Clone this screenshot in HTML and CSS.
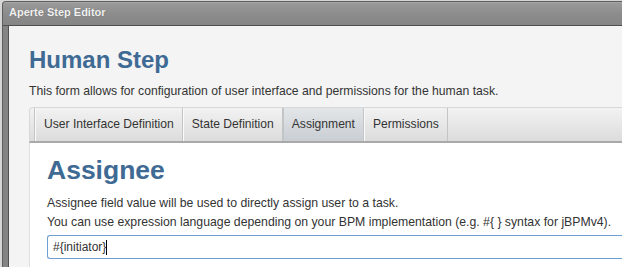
FILE: index.html
```html
<!DOCTYPE html>
<html lang="en">
<head>
  <meta charset="UTF-8">
  <title>Aperte Step Editor</title>
  <link rel="stylesheet" href="styles.css">
</head>
<body>
  <div class="window">
    <div class="titlebar">Aperte Step Editor</div>
    <div class="frame">
      <div class="content">
        <h1>Human Step</h1>
        <p class="intro">This form allows for configuration of user interface and permissions for the human task.</p>

        <div class="tabs">
          <div class="tab-start"></div>
          <a class="tab" href="#">User Interface Definition</a>
          <a class="tab" href="#">State Definition</a>
          <a class="tab active" href="#">Assignment</a>
          <a class="tab" href="#">Permissions</a>
        </div>

        <div class="panel">
          <h2>Assignee</h2>
          <p class="help">Assignee field value will be used to directly assign user to a task.<br>
            You can use expression language depending on your BPM implementation (e.g. #{ } syntax for jBPMv4).</p>
          <div class="field"><span class="value">#{initiator}</span><span class="caret"></span></div>
        </div>
      </div>
    </div>
  </div>
</body>
</html>
```

FILE: styles.css
```css
*, *::before, *::after {
  box-sizing: border-box;
}

html, body {
  margin: 0;
  padding: 0;
  height: 100%;
  overflow: hidden;
}

body {
  font-family: "Liberation Sans", Arial, sans-serif;
  background: #d6d6d6;
  color: #333;
  padding: 1px 0 0 2px;
}

.window {
  width: 620px;
  height: 266px;
  border: 1px solid #5e5e5e;
  border-right: none;
  border-bottom: none;
  border-radius: 4px 0 0 0;
  overflow: hidden;
  background: #858585;
  display: flex;
  flex-direction: column;
}

.titlebar {
  flex: none;
  height: 24px;
  padding: 0 0 0 6px;
  background: linear-gradient(#b4b4b4 0, #9a9a9a 1px, #8c8c8c 12px, #858585 100%);
  border-bottom: 1px solid #4f4f4f;
  color: #f0f0f0;
  font-size: 11px;
  font-weight: bold;
  line-height: 21px;
  text-shadow: 0 0 1px #666;
}

.frame {
  flex: 1;
  padding-left: 5px;
  background: #848484;
  display: flex;
}

.content {
  flex: 1;
  background: #f4f4f4;
  border-left: 1px solid #505050;
  padding: 20px 0 0 20px;
  display: flex;
  flex-direction: column;
  overflow: hidden;
}

h1 {
  margin: 0;
  font-size: 24px;
  line-height: 28px;
  color: #3f6a94;
}

.intro {
  margin: 9px 0 8px;
  font-size: 12.2px;
  line-height: 16px;
  white-space: nowrap;
}

.tabs {
  flex: none;
  display: flex;
  height: 36px;
  border: 1px solid #d8d8d8;
  border-bottom: 2px solid #a9a9a9;
  border-right: none;
  border-radius: 4px 0 0 0;
  background: linear-gradient(#f2f2f2, #dcdcdc);
}

.tab-start {
  width: 5px;
  border-right: 1px solid #c4c4c4;
}

.tab {
  display: block;
  padding: 0 8px 0 9px;
  border-right: 1px solid #c4c4c4;
  box-shadow: inset 1px 0 0 #fafafa;
  color: #333;
  font-size: 12.1px;
  line-height: 33px;
  text-decoration: none;
  white-space: nowrap;
}

.tab.active {
  background: linear-gradient(#e3e6e9, #c9ced3);
  box-shadow: inset 1px 0 0 #c0c5ca;
}

.panel {
  flex: 1;
  background: #fff;
  border-left: 1px solid #e0e0e0;
  padding: 12px 0 0 17px;
  overflow: hidden;
}

h2 {
  margin: 0;
  font-size: 26.5px;
  line-height: 30px;
  color: #3f6a94;
}

.help {
  margin: 9px 0 3px;
  font-size: 12.25px;
  line-height: 19px;
  white-space: nowrap;
}

.field {
  display: flex;
  align-items: center;
  height: 24px;
  border: 1px solid #6e9fd2;
  border-right: none;
  border-radius: 3px 0 0 3px;
  padding-left: 5px;
  font-size: 12px;
  background: #fff;
}

.caret {
  display: inline-block;
  width: 1px;
  height: 15px;
  background: #000;
}
```
